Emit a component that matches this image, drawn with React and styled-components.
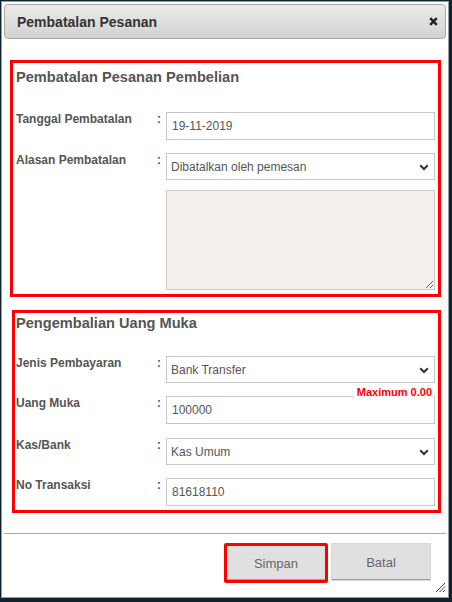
import React from "react";
import styled, { createGlobalStyle } from "styled-components";

const GlobalStyle = createGlobalStyle`
  * { box-sizing: border-box; }
  body {
    margin: 0;
    background: #0f2430;
    font-family: "Liberation Sans", Arial, sans-serif;
  }
`;

const Page = styled.div`
  width: 452px;
  height: 602px;
  padding: 1px 0 0 1px;
`;

const Dialog = styled.div`
  position: relative;
  width: 448px;
  height: 597px;
  background: #fff;
  border: 1px solid #9a9a9a;
  padding: 2px;
  display: flex;
  flex-direction: column;
`;

const TitleBar = styled.div`
  height: 35px;
  border: 1px solid #a9a9a9;
  border-radius: 4px;
  background: linear-gradient(#ebebeb, #d2d2d2);
  padding: 0 7px 0 12px;
  display: flex;
  align-items: center;
  justify-content: space-between;
`;

const Title = styled.span`
  font-size: 14px;
  font-weight: bold;
  color: #333;
`;

const CloseBtn = styled.button`
  border: 0;
  background: none;
  padding: 0;
  display: flex;
  cursor: pointer;
`;

const Section = styled.div`
  margin: ${p => p.mt}px 5px 0 ${p => p.ml}px;
  border: 3px solid #ff0000;
  padding: ${p => p.pt}px 0 4px ${p => 16 - p.ml - 7}px;
`;

const Heading = styled.div`
  font-size: 14.6px;
  line-height: 18px;
  font-weight: bold;
  color: #555;
`;

const Row = styled.div`
  display: grid;
  grid-template-columns: 141px 9px 269px;
  align-items: start;
  margin-top: ${p => p.mt}px;
`;

const Label = styled.label`
  font-size: 12px;
  line-height: 15px;
  font-weight: bold;
  color: #555;
`;

const Colon = styled.span`
  font-size: 12px;
  line-height: 14px;
  font-weight: bold;
  color: #555;
`;

const Field = styled.div`
  position: relative;
  grid-column: ${p => (p.full ? "3" : "auto")};
`;

const TextInput = styled.input`
  display: block;
  width: 269px;
  height: 28px;
  border: 1px solid #c8c8c8;
  padding: 0 5px;
  font-family: inherit;
  font-size: 12px;
  color: #555;
  background: #fff;
  outline: none;
`;

const Select = styled.select`
  display: block;
  width: 269px;
  height: 27px;
  border: 1px solid #c8c8c8;
  border-radius: 0;
  padding: 0 4px;
  font-family: inherit;
  font-size: 12px;
  color: #555;
  background: #fff;
  appearance: none;
  outline: none;
`;

const Chevron = styled.svg`
  position: absolute;
  right: 6px;
  top: 11px;
  pointer-events: none;
`;

const TextArea = styled.textarea`
  display: block;
  width: 269px;
  height: 100px;
  border: 1px solid #c8c8c8;
  background: #f2efec;
  font-family: inherit;
  font-size: 12px;
  outline: none;
`;

const Warning = styled.span`
  position: absolute;
  right: 2px;
  top: -10px;
  padding: 0 1px 0 3px;
  background: #fff;
  color: #ff0000;
  font-size: 11px;
  line-height: 12px;
  font-weight: bold;
`;

const Separator = styled.div`
  margin-top: 20px;
  border-top: 1px solid #a8a8a8;
`;

const Footer = styled.div`
  margin-top: 9px;
  padding-right: 15px;
  display: flex;
  justify-content: flex-end;
  align-items: flex-start;
  gap: 3px;
`;

const Button = styled.button`
  width: ${p => (p.primary ? 104 : 100)}px;
  height: ${p => (p.primary ? 40 : 38)}px;
  border: ${p => (p.primary ? "3px solid #ff0000" : "1px solid #d8d8d8")};
  border-radius: ${p => (p.primary ? 2 : 0)}px;
  background: #e0e0e0;
  box-shadow: inset 0 -1px 0 #9c9c9c;
  font-family: inherit;
  font-size: 13px;
  color: #666;
  cursor: pointer;
`;

const Grip = styled.svg`
  position: absolute;
  right: 2px;
  bottom: 4px;
`;

const DownIcon = () => (
  <Chevron width="10" height="7" viewBox="0 0 10 7">
    <polyline points="1.2,1.2 5,5 8.8,1.2" fill="none" stroke="#333" strokeWidth="2" />
  </Chevron>
);

const SelectField = ({ value }) => (
  <Field>
    <Select defaultValue={value}>
      <option>{value}</option>
    </Select>
    <DownIcon />
  </Field>
);

const InputRow = ({ label, mt, children }) => (
  <Row mt={mt}>
    <Label>{label}</Label>
    <Colon>:</Colon>
    {children}
  </Row>
);

export default function App() {
  return (
    <Page>
      <GlobalStyle />
      <Dialog>
        <TitleBar>
          <Title>Pembatalan Pesanan</Title>
          <CloseBtn>
            <svg width="9" height="9" viewBox="0 0 9 9">
              <path d="M1.2 1.2 L7.8 7.8 M7.8 1.2 L1.2 7.8" stroke="#222" strokeWidth="2.4" />
            </svg>
          </CloseBtn>
        </TitleBar>

        <Section mt={21} ml={6} pt={5}>
          <Heading>Pembatalan Pesanan Pembelian</Heading>
          <InputRow label="Tanggal Pembatalan" mt={26}>
            <Field>
              <TextInput defaultValue="19-11-2019" />
            </Field>
          </InputRow>
          <InputRow label="Alasan Pembatalan" mt={13}>
            <SelectField value="Dibatalkan oleh pemesan" />
          </InputRow>
          <Row mt={10}>
            <Field full>
              <TextArea />
            </Field>
          </Row>
        </Section>

        <Section mt={13} ml={8} pt={1}>
          <Heading>Pengembalian Uang Muka</Heading>
          <InputRow label="Jenis Pembayaran" mt={24}>
            <SelectField value="Bank Transfer" />
          </InputRow>
          <InputRow label="Uang Muka" mt={13}>
            <Field>
              <TextInput defaultValue="100000" />
              <Warning>Maximum 0.00</Warning>
            </Field>
          </InputRow>
          <InputRow label="Kas/Bank" mt={14}>
            <SelectField value="Kas Umum" />
          </InputRow>
          <InputRow label="No Transaksi" mt={13}>
            <Field>
              <TextInput defaultValue="81618110" />
            </Field>
          </InputRow>
        </Section>

        <Separator />
        <Footer>
          <Button primary>Simpan</Button>
          <Button>Batal</Button>
        </Footer>

        <Grip width="11" height="11" viewBox="0 0 11 11">
          <path d="M1 10 L10 1 M4.5 10 L10 4.5 M8 10 L10 8" stroke="#444" strokeWidth="1" />
        </Grip>
      </Dialog>
    </Page>
  );
}
